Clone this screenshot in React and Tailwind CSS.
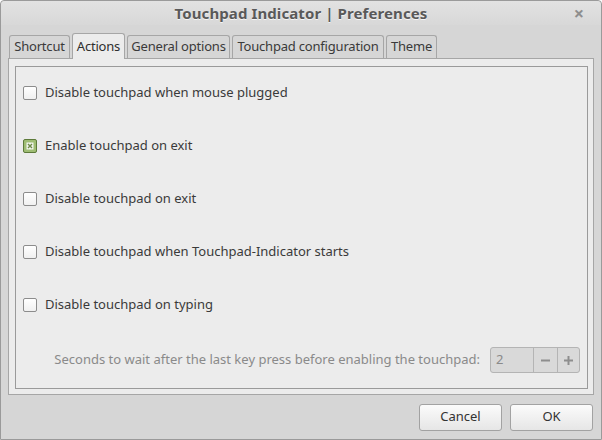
import React from "react";

function Check({ checked }) {
  if (checked) {
    return (
      <span className="flex h-[14px] w-[14px] shrink-0 items-center justify-center rounded-[2px] border border-[#5d7a3a] bg-[#9fbd74]">
        <svg width="8" height="8" viewBox="0 0 8 8">
          <rect x="0.5" y="0.5" width="7" height="7" fill="#f2f5ee" />
          <path d="M2 2 L6 6 M6 2 L2 6" stroke="#6d8a48" strokeWidth="1.4" />
        </svg>
      </span>
    );
  }
  return (
    <span className="block h-[14px] w-[14px] shrink-0 rounded-[2px] border border-[#8c8c8c] bg-gradient-to-b from-[#ffffff] to-[#f0f0f0]" />
  );
}

function Row({ label, checked }) {
  return (
    <div className="flex h-[53px] items-center gap-[8px] pl-[7px]">
      <Check checked={checked} />
      <span className="text-[13px] text-[#3a3a3a]">{label}</span>
    </div>
  );
}

function Tab({ label, active, w }) {
  if (active) {
    return (
      <div className={"relative z-10 -mb-px flex h-[26px] items-center justify-center rounded-t-[3px] border border-b-0 border-[#a6a6a6] bg-[#ececec] text-[13px] tracking-[-0.2px] text-[#2e2e2e] " + w}>
        {label}
      </div>
    );
  }
  return (
    <div className={"flex h-[23px] items-center justify-center rounded-t-[3px] border border-b-0 border-[#a6a6a6] bg-[#d6d6d6] text-[13px] tracking-[-0.2px] text-[#3a3a3a] " + w}>
      {label}
    </div>
  );
}

function Button({ label }) {
  return (
    <div className="flex h-[27px] w-[83px] items-center justify-center rounded-[3px] border border-[#a2a2a2] bg-gradient-to-b from-[#fbfbfb] to-[#e6e6e6] text-[13px] text-[#333]">
      {label}
    </div>
  );
}

export default function App() {
  return (
    <div
      className="flex h-[440px] w-[602px] flex-col rounded-t-[4px] border border-[#9a9a9a] bg-[#d6d6d6]"
      style={{ fontFamily: '"Noto Sans", "DejaVu Sans", sans-serif' }}
    >
      <div className="relative flex h-[24px] items-center justify-center bg-gradient-to-b from-[#e2e2e2] to-[#d8d8d8] rounded-t-[4px]">
        <span className="text-[15px] font-bold tracking-[0.1px] text-[#595959] [text-shadow:0_1px_0_#f4f4f4]">
          Touchpad Indicator | Preferences
        </span>
        <span className="absolute right-[17px] top-[1px] text-[18px] font-bold leading-[22px] text-[#8e8e8e]">×</span>
      </div>
      <div className="flex h-[33px] items-end gap-[2px] pl-[8px]">
        <Tab label="Shortcut" w="w-[61px]" />
        <Tab label="Actions" active w="w-[53px]" />
        <Tab label="General options" w="w-[103px]" />
        <Tab label="Touchpad configuration" w="w-[152px]" />
        <Tab label="Theme" w="w-[51px]" />
      </div>
      <div className="mx-[7px] flex h-[337px] flex-col border border-[#a6a6a6] bg-[#ececec] pb-[5px] pl-[6px] pr-[5px] pt-[7px]">
        <div className="flex flex-1 flex-col border border-[#9a9a9a] bg-[#ececec]">
          <div className="-mt-px flex flex-col">
            <Row label="Disable touchpad when mouse plugged" />
            <Row label="Enable touchpad on exit" checked />
            <Row label="Disable touchpad on exit" />
            <Row label="Disable touchpad when Touchpad-Indicator starts" />
            <Row label="Disable touchpad on typing" />
          </div>
          <div className="mt-[16px] flex items-center justify-end gap-[10px] pr-[7px]">
            <span className="text-[13px] text-[#8a8a8a]">
              Seconds to wait after the last key press before enabling the touchpad:
            </span>
            <div className="flex h-[26px] w-[90px] overflow-hidden rounded-[3px] border border-[#b4b4b4] bg-[#d9d9d9]">
              <div className="flex w-[42px] items-center pl-[5px] text-[13px] text-[#8a8a8a]">2</div>
              <div className="flex w-[24px] items-center justify-center border-l border-[#b4b4b4]">
                <svg width="11" height="11" viewBox="0 0 11 11"><path d="M1 5.5 H10" stroke="#8e8e8e" strokeWidth="2" /></svg>
              </div>
              <div className="flex flex-1 items-center justify-center border-l border-[#b4b4b4]">
                <svg width="11" height="11" viewBox="0 0 11 11"><path d="M1 5.5 H10 M5.5 1 V10" stroke="#8e8e8e" strokeWidth="2" /></svg>
              </div>
            </div>
          </div>
        </div>
      </div>
      <div className="flex flex-1 items-center justify-end gap-[8px] pr-[8px]">
        <Button label="Cancel" />
        <Button label="OK" />
      </div>
    </div>
  );
}
